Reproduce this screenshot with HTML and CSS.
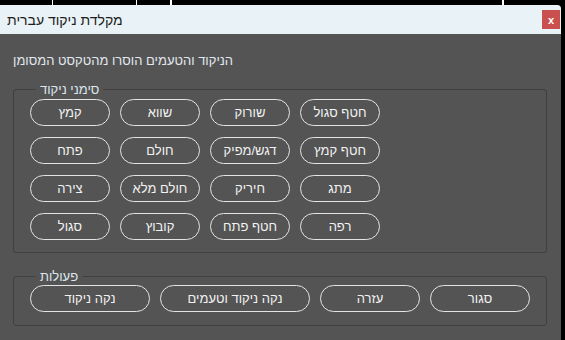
FILE: index.html
```html
<!DOCTYPE html>
<html>
<head>
<meta charset="utf-8">
<title>מקלדת ניקוד עברית</title>
<link rel="stylesheet" href="styles.css">
</head>
<body>
<div class="dialog">
	<div class="titlebar">
		<span class="title">מקלדת ניקוד עברית</span>
		<a class="close" href="javascript:">x</a>
	</div>
	<div class="content">
		<p class="msg">הניקוד והטעמים הוסרו מהטקסט המסומן</p>

		<fieldset class="group">
			<legend>סימני ניקוד</legend>
			<div class="keys">
				<button class="btn">קמץ</button>
				<button class="btn">שווא</button>
				<button class="btn">שורוק</button>
				<button class="btn">חטף סגול</button>
				<button class="btn">פתח</button>
				<button class="btn">חולם</button>
				<button class="btn">דגש/מפיק</button>
				<button class="btn">חטף קמץ</button>
				<button class="btn">צירה</button>
				<button class="btn">חולם מלא</button>
				<button class="btn">חיריק</button>
				<button class="btn">מתג</button>
				<button class="btn">סגול</button>
				<button class="btn">קובוץ</button>
				<button class="btn">חטף פתח</button>
				<button class="btn">רפה</button>
			</div>
		</fieldset>

		<fieldset class="group actions-group">
			<legend>פעולות</legend>
			<div class="actions">
				<button class="btn btn-clear">נקה ניקוד</button>
				<button class="btn btn-all">נקה ניקוד וטעמים</button>
				<button class="btn btn-small">עזרה</button>
				<button class="btn btn-small">סגור</button>
			</div>
		</fieldset>
	</div>
</div>
</body>
</html>
```

FILE: styles.css
```css
body{margin: 0;background-color: #000;font-family: "Liberation Sans", "DejaVu Sans", sans-serif;font-size: 13px;
	background-image: linear-gradient(#fff, #fff), linear-gradient(#fff, #fff), linear-gradient(#fff, #fff), linear-gradient(#fff, #fff);
	background-size: 1px 5px, 1px 5px, 2px 5px, 2px 5px;
	background-position: 52px 0, 136px 0, 170px 0, 502px 0;
	background-repeat: no-repeat;}
.dialog{margin-top: 5px;width: 561px;height: 335px;background-color: #545454;border-radius: 0 4px 0 0;overflow: hidden;}
.titlebar{height: 29px;background-color: #e9f3f7;display: flex;align-items: center;justify-content: space-between;padding: 0 1px 0 7px;}
.title{color: #1e1e1e;font-size: 14px;}
.close{width: 18px;height: 19px;background-color: #c9504f;color: #fff;font-weight: bold;font-size: 11px;text-decoration: none;display: flex;align-items: center;justify-content: center;}
.content{padding: 0 14px 0 13px;}
.msg{margin: 0;padding: 19px 0 0 0;color: #e2e8ee;line-height: 15px;}
.group{margin: 14px 0 0 0;padding: 2px 16px 12px 16px;border: 1px solid #404040;border-radius: 3px;}
.group legend{padding: 0 4px;margin-left: 6px;color: #dde6ef;line-height: 15px;}
.keys{display: grid;grid-template-columns: repeat(4, 80px);column-gap: 10px;row-gap: 11px;}
.btn{height: 27px;border: 1px solid #e4e4e4;border-radius: 14px;background: transparent;color: #f2f2f2;font-family: inherit;font-size: 13px;padding: 0;}
.actions-group{margin-top: 16px;padding-top: 1px;padding-bottom: 13px;}
.actions{display: flex;gap: 10px;}
.btn-clear{width: 120px;}
.btn-all{width: 150px;}
.btn-small{width: 100px;}
```
